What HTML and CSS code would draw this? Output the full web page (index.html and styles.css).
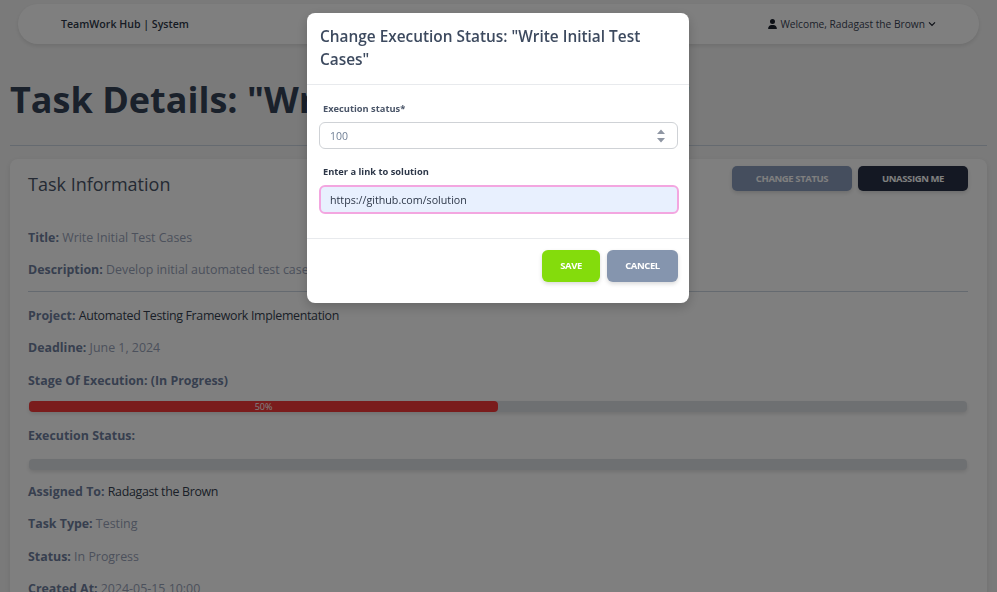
FILE: index.html
```html
<!DOCTYPE html>
<html lang="en">
<head>
  <meta charset="UTF-8">
  <meta name="viewport" content="width=device-width, initial-scale=1.0">
  <title>Task Details</title>
  <link rel="stylesheet" href="styles.css">
</head>
<body>
  <header class="navbar">
    <span class="brand">TeamWork Hub | System</span>
    <span class="user-menu">
      <svg class="user-icon" viewBox="0 0 448 512"><path d="M224 256a128 128 0 1 0 0-256 128 128 0 1 0 0 256zm-45.700 48C79.800 304 0 383.800 0 482.300 0 498.700 13.300 512 29.700 512h388.600c16.400 0 29.700-13.300 29.700-29.700C448 383.800 368.200 304 269.700 304h-91.400z"/></svg>
      Welcome, Radagast the Brown
      <svg class="chevron" viewBox="0 0 12 8"><path d="M1.500 1.500 6 6l4.500-4.500"/></svg>
    </span>
  </header>
  <main class="page">
    <h1>Task Details: "Write Initial Test Cases"</h1>
    <hr class="page-rule">
    <section class="card">
      <div class="card-head">
        <h2>Task Information</h2>
        <div class="card-actions">
          <button class="btn btn-slate">CHANGE STATUS</button>
          <button class="btn btn-dark">UNASSIGN ME</button>
        </div>
      </div>
      <p class="row first"><b>Title:</b> Write Initial Test Cases</p>
      <p class="row row-tight"><b>Description:</b> Develop initial automated test cases for the framework</p>
      <hr class="card-rule">
      <p class="row"><b>Project:</b> <span class="link">Automated Testing Framework Implementation</span></p>
      <p class="row row-tight"><b>Deadline:</b> June 1, 2024</p>
      <p class="row"><b>Stage Of Execution: (In Progress)</b></p>
      <div class="progress"><div class="progress-fill" style="width: 50%">50%</div></div>
      <p class="row"><b>Execution Status:</b></p>
      <div class="progress progress-empty"></div>
      <p class="row"><b>Assigned To:</b> <span class="link">Radagast the Brown</span></p>
      <p class="row"><b>Task Type:</b> Testing</p>
      <p class="row"><b>Status:</b> In Progress</p>
      <p class="row"><b>Created At:</b> 2024-05-15 10:00</p>
    </section>
  </main>

  <div class="backdrop">
    <div class="modal">
      <div class="modal-head">
        <h3>Change Execution Status: "Write Initial Test Cases"</h3>
      </div>
      <div class="modal-body">
        <label class="field-label">Execution status*</label>
        <div class="number-input">
          <span>100</span>
          <svg class="spinner" viewBox="0 0 8 14"><path d="M4 0.500 8 5H0zM4 13.500 0 9h8z"/></svg>
        </div>
        <label class="field-label field-label-dark">Enter a link to solution</label>
        <input class="text-input" type="text" value="https://github.com/solution">
      </div>
      <div class="modal-foot">
        <button class="btn btn-save">SAVE</button>
        <button class="btn btn-cancel">CANCEL</button>
      </div>
    </div>
  </div>
</body>
</html>
```

FILE: styles.css
```css
* {
  box-sizing: border-box;
}
html, body {
  height: 100%;
}
body {
  margin: 0;
  overflow: hidden;
  font-family: "Open Sans", sans-serif;
  font-size: 12.4px;
  background-color: #f5f5f5;
  color: #4a5568;
}
.navbar {
  display: flex;
  justify-content: space-between;
  align-items: center;
  height: 40px;
  margin: 4px 18px 0;
  padding: 0 43px 0 43px;
  background-color: #fff;
  border-radius: 20px;
  box-shadow: 0 2px 4px rgba(0, 0, 0, 0.1);
}
.brand {
  font-size: 10.6px;
  font-weight: 600;
  color: #2d3748;
}
.user-menu {
  display: flex;
  align-items: center;
  gap: 3px;
  font-size: 10.2px;
  color: #3a4354;
}
.user-icon {
  width: 9px;
  height: 10px;
  fill: #1a202c;
}
.chevron {
  width: 8px;
  height: 6px;
  fill: none;
  stroke: #1a202c;
  stroke-width: 1.8;
}
.page {
  padding: 0 10px;
}
h1 {
  margin: 30px 0 0;
  font-size: 36px;
  line-height: 52px;
  font-weight: 700;
  color: #344256;
  white-space: nowrap;
}
.page-rule {
  margin: 19px 0 13px;
  border: 0;
  border-top: 1px solid #cbd5e0;
}
.card {
  padding: 7px 19px 0 18px;
  background-color: #fff;
  border-radius: 8px;
  box-shadow: 0 2px 6px rgba(0, 0, 0, 0.1);
}
.card-head {
  display: flex;
  justify-content: space-between;
  align-items: flex-start;
}
h2 {
  margin: 6px 0 0;
  font-size: 18px;
  line-height: 24px;
  font-weight: 500;
  color: #4a5568;
}
.card-actions {
  display: flex;
  gap: 6px;
}
.btn {
  border: 0;
  border-radius: 5px;
  font-family: inherit;
  font-size: 9.5px;
  font-weight: 700;
  letter-spacing: -0.4px;
  box-shadow: 0 2px 4px rgba(0, 0, 0, 0.15);
}
.btn-slate {
  width: 120px;
  height: 25px;
  padding-bottom: 2px;
  background-color: #8a9cbc;
  color: #fff;
}
.btn-dark {
  width: 110px;
  height: 25px;
  padding-bottom: 2px;
  background-color: #283046;
  color: #fff;
}
.row {
  margin: 0;
  height: 18px;
  line-height: 18px;
  color: #98a2b8;
  white-space: nowrap;
}
.row + .row {
  margin-top: 14.500px;
}
.row.first {
  margin-top: 33px;
}
.row.row-tight {
  margin-top: 14px;
}
.row b {
  font-weight: 700;
  color: #6f7f9e;
}
.link {
  color: #343e50;
  letter-spacing: -0.32px;
}
.card-rule {
  margin: 12px 0 15px;
  border: 0;
  border-top: 1px solid #cbd5e0;
}
.progress {
  height: 11px;
  margin: 11px 1px 15px;
  background-color: #dde1e5;
  border-radius: 4px;
  box-shadow: 0 2px 4px rgba(0, 0, 0, 0.12);
}
.progress-empty {
  margin: 14px 1px 13px;
}
.progress-fill {
  height: 100%;
  background-color: #f53838;
  border-radius: 4px;
  font-size: 9px;
  line-height: 11px;
  text-align: center;
  color: #fff;
}
.backdrop {
  position: fixed;
  inset: 0;
  display: flex;
  justify-content: center;
  align-items: flex-start;
  padding: 13px 1px 0 0;
  background-color: rgba(0, 0, 0, 0.5);
}
.modal {
  width: 382px;
  height: 290px;
  background-color: #fff;
  border-radius: 8px;
  box-shadow: 0 4px 12px rgba(0, 0, 0, 0.2);
}
.modal-head {
  height: 72px;
  padding: 12px 12px 0 13px;
  border-bottom: 1px solid #e8eaed;
}
h3 {
  margin: 0;
  font-size: 15.4px;
  line-height: 23px;
  font-weight: 600;
  color: #3d4a5f;
}
.modal-body {
  height: 154px;
  padding: 17px 11px 0 12px;
  border-bottom: 1px solid #e8eaed;
}
.field-label {
  display: block;
  margin-left: 4px;
  font-size: 9.3px;
  line-height: 14px;
  font-weight: 700;
  color: #4a5568;
}
.field-label-dark {
  margin-top: 16px;
  color: #2d3748;
}
.number-input {
  display: flex;
  justify-content: space-between;
  align-items: center;
  height: 27px;
  margin-top: 6px;
  padding: 0 12px 0 10px;
  border: 1px solid #cfd2d6;
  border-radius: 6px;
  font-size: 10.5px;
  color: #718096;
}
.spinner {
  width: 8px;
  height: 14px;
  fill: #8f96a3;
}
.text-input {
  display: block;
  width: calc(100% + 1px);
  height: 29px;
  margin-top: 6px;
  padding: 0 9px;
  border: 2px solid #f3a6e0;
  border-radius: 6px;
  outline: 0;
  font-family: inherit;
  font-size: 10.7px;
  background-color: #e8f0fe;
  color: #2d3748;
}
.modal-foot {
  display: flex;
  justify-content: flex-end;
  gap: 7px;
  padding: 11px 11px 0;
}
.btn-save {
  width: 58px;
  height: 32px;
  padding-bottom: 3px;
  background-color: #84dc0c;
  color: #fff;
  border-radius: 6px;
}
.btn-cancel {
  width: 71px;
  height: 32px;
  padding-bottom: 3px;
  background-color: #8595ae;
  color: #fff;
  border-radius: 6px;
}
```
